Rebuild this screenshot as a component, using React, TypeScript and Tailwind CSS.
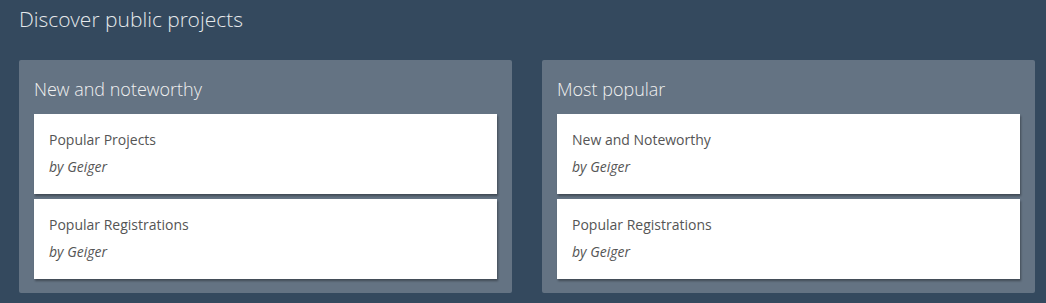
import React from "react";

const font = { fontFamily: '"Open Sans", "Noto Sans", sans-serif' };
const lightFont = { fontFamily: '"Open Sans Light", "Open Sans", "Noto Sans", sans-serif' };

function Card({ title }: { title: string }) {
  return (
    <div className="h-[80px] bg-white px-[15px] pt-[17px] shadow-[1px_2px_2px_rgba(0,0,0,0.35)]">
      <div className="text-[14px] leading-[18px] text-[#555]">{title}</div>
      <div className="mt-[9px] text-[14px] leading-[18px] italic text-[#555]">by Geiger</div>
    </div>
  );
}

function Panel({ title, items }: { title: string; items: string[] }) {
  return (
    <div className="rounded-[2px] bg-[#647383] px-[15px] pt-[17px] pb-[14px]">
      <div className="mb-[13px] text-[18px] leading-[24px] font-light text-[#f0f0f0]" style={lightFont}>
        {title}
      </div>
      <div className="flex flex-col gap-[5px]">
        {items.map((t) => (
          <Card key={t} title={t} />
        ))}
      </div>
    </div>
  );
}

export default function App() {
  return (
    <div className="h-[303px] w-[1046px] overflow-hidden bg-[#34495e] pl-[19px] pr-[11px]" style={font}>
      <div className="pt-[3px] text-[21px] leading-[32px] font-light text-[#e6e9ec]" style={lightFont}>
        Discover public projects
      </div>
      <div className="mt-[25px] grid grid-cols-2 gap-[30px]">
        <Panel title="New and noteworthy" items={["Popular Projects", "Popular Registrations"]} />
        <Panel title="Most popular" items={["New and Noteworthy", "Popular Registrations"]} />
      </div>
    </div>
  );
}
